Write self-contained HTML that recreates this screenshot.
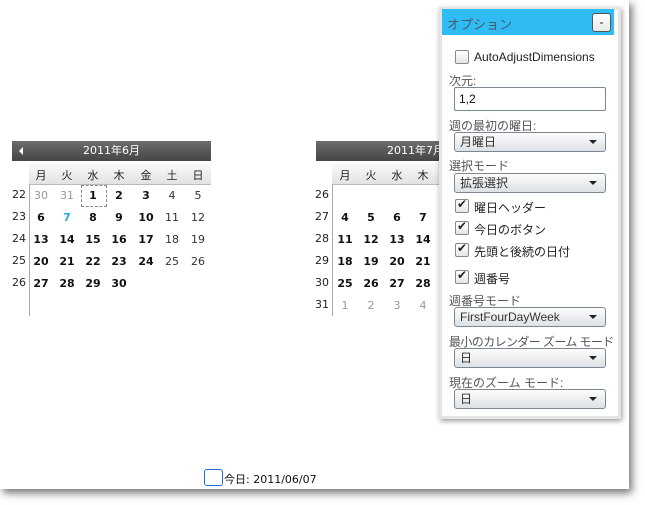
<!DOCTYPE html>
<html><head><meta charset="utf-8"><style>
body{margin:0;width:645px;height:505px;background:#fff;position:relative;overflow:hidden;font-family:"Liberation Sans","Noto Sans CJK JP",sans-serif;font-size:12px;color:#222}
.win{position:absolute;left:0;top:0;width:629px;height:489px;background:#fff;box-shadow:3px 4px 8px rgba(0,0,0,.55)}
.a{position:absolute}
.hdr{position:absolute;height:20px;background:linear-gradient(#6d6d6d,#454545);color:#fff;font-size:12px;line-height:20px;text-align:center;font-family:"DejaVu Sans","Noto Sans CJK JP",sans-serif;font-size:11px}
.dn{position:absolute;height:21px;background:linear-gradient(#fafafa,#e2e2e2);border-bottom:1px solid #bbb}
.c{position:absolute;width:26px;text-align:center;font-size:11px;font-family:"DejaVu Sans","Noto Sans CJK JP",sans-serif}
.b{font-weight:bold;color:#111}
.g{color:#999}
.n{color:#333}
.wk{position:absolute;width:16px;text-align:right;font-size:11px;color:#222;font-family:"DejaVu Sans",sans-serif}
.panel{position:absolute;left:439px;top:7px;width:176px;height:406px;background:#fff;border:3px solid #e4e4e4;box-shadow:1px 2px 5px rgba(0,0,0,.4)}
.in{position:absolute;left:-2px;top:-3px;width:180px;height:410px}
.lbl{position:absolute;left:9px;font-size:12px;color:#555;white-space:nowrap}
.cb{position:absolute;left:15px;width:12px;height:12px;border:1px solid #8a8a8a;border-radius:2px;background:linear-gradient(#fff,#e6e6e6)}
.cb.on::after{content:"✔";position:absolute;left:1px;top:-3px;font-size:12px;color:#222}
.ct{position:absolute;left:34px;font-size:12px;color:#222}
.dd{position:absolute;left:14px;width:150px;height:18px;border:1px solid #7a8794;border-radius:3px;background:linear-gradient(#fdfdfd,#dde1e5);font-size:12px;line-height:18px;color:#333;text-indent:5px}
.dd::after{content:"";position:absolute;right:8px;top:7px;border-left:4px solid transparent;border-right:4px solid transparent;border-top:4px solid #222}
</style></head><body>
<div class="win"></div>

<!-- Calendar 1 -->
<div class="hdr" style="left:12px;top:141px;width:199px">2011年6月</div>
<div class="a" style="left:19px;top:147px;border-top:4px solid transparent;border-bottom:4px solid transparent;border-right:4px solid #fff"></div>
<div class="dn" style="left:29px;top:163px;width:182px"></div>
<div class="a" style="left:29px;top:184px;width:1px;height:132px;background:#aaa"></div>
<div class="c" style="left:28px;top:167px">月</div><div class="c" style="left:54px;top:167px">火</div><div class="c" style="left:80px;top:167px">水</div><div class="c" style="left:106px;top:167px">木</div><div class="c" style="left:133px;top:167px">金</div><div class="c" style="left:159px;top:167px">土</div><div class="c" style="left:185px;top:167px">日</div>
<div class="wk" style="left:10px;top:188px">22</div><div class="wk" style="left:10px;top:210px">23</div><div class="wk" style="left:10px;top:232px">24</div><div class="wk" style="left:10px;top:254px">25</div><div class="wk" style="left:10px;top:276px">26</div>
<div class="a" style="left:81px;top:185px;width:24px;height:20px;border:1px dashed #888"></div>
<div class="c g" style="left:28px;top:189px">30</div><div class="c g" style="left:54px;top:189px">31</div><div class="c b" style="left:80px;top:189px">1</div><div class="c b" style="left:106px;top:189px">2</div><div class="c b" style="left:133px;top:189px">3</div><div class="c n" style="left:159px;top:189px">4</div><div class="c n" style="left:185px;top:189px">5</div>
<div class="c b" style="left:28px;top:211px">6</div><div class="c b" style="left:54px;top:211px;color:#2aa7e0">7</div><div class="c b" style="left:80px;top:211px">8</div><div class="c b" style="left:106px;top:211px">9</div><div class="c b" style="left:133px;top:211px">10</div><div class="c n" style="left:159px;top:211px">11</div><div class="c n" style="left:185px;top:211px">12</div>
<div class="c b" style="left:28px;top:233px">13</div><div class="c b" style="left:54px;top:233px">14</div><div class="c b" style="left:80px;top:233px">15</div><div class="c b" style="left:106px;top:233px">16</div><div class="c b" style="left:133px;top:233px">17</div><div class="c n" style="left:159px;top:233px">18</div><div class="c n" style="left:185px;top:233px">19</div>
<div class="c b" style="left:28px;top:255px">20</div><div class="c b" style="left:54px;top:255px">21</div><div class="c b" style="left:80px;top:255px">22</div><div class="c b" style="left:106px;top:255px">23</div><div class="c b" style="left:133px;top:255px">24</div><div class="c n" style="left:159px;top:255px">25</div><div class="c n" style="left:185px;top:255px">26</div>
<div class="c b" style="left:28px;top:277px">27</div><div class="c b" style="left:54px;top:277px">28</div><div class="c b" style="left:80px;top:277px">29</div><div class="c b" style="left:106px;top:277px">30</div>

<!-- Calendar 2 -->
<div class="hdr" style="left:316px;top:141px;width:199px">2011年7月</div>
<div class="dn" style="left:332px;top:163px;width:182px"></div>
<div class="a" style="left:332px;top:184px;width:1px;height:132px;background:#aaa"></div>
<div class="c" style="left:332px;top:167px">月</div><div class="c" style="left:358px;top:167px">火</div><div class="c" style="left:384px;top:167px">水</div><div class="c" style="left:410px;top:167px">木</div>
<div class="wk" style="left:313px;top:188px">26</div><div class="wk" style="left:313px;top:210px">27</div><div class="wk" style="left:313px;top:232px">28</div><div class="wk" style="left:313px;top:254px">29</div><div class="wk" style="left:313px;top:276px">30</div><div class="wk" style="left:313px;top:298px">31</div>
<div class="c b" style="left:332px;top:211px">4</div><div class="c b" style="left:358px;top:211px">5</div><div class="c b" style="left:384px;top:211px">6</div><div class="c b" style="left:410px;top:211px">7</div>
<div class="c b" style="left:332px;top:233px">11</div><div class="c b" style="left:358px;top:233px">12</div><div class="c b" style="left:384px;top:233px">13</div><div class="c b" style="left:410px;top:233px">14</div>
<div class="c b" style="left:332px;top:255px">18</div><div class="c b" style="left:358px;top:255px">19</div><div class="c b" style="left:384px;top:255px">20</div><div class="c b" style="left:410px;top:255px">21</div>
<div class="c b" style="left:332px;top:277px">25</div><div class="c b" style="left:358px;top:277px">26</div><div class="c b" style="left:384px;top:277px">27</div><div class="c b" style="left:410px;top:277px">28</div>
<div class="c g" style="left:332px;top:299px">1</div><div class="c g" style="left:358px;top:299px">2</div><div class="c g" style="left:384px;top:299px">3</div><div class="c g" style="left:410px;top:299px">4</div>

<!-- Today -->
<div class="a" style="left:204px;top:469px;width:17px;height:15px;border:1px solid #1e6fd0;border-radius:3px"></div>
<div class="a" style="left:224px;top:471px;font-size:11px;color:#111;font-family:'DejaVu Sans','Noto Sans CJK JP',sans-serif">今日: 2011/06/07</div>

<!-- Panel -->
<div class="panel"><div class="in">
  <div class="a" style="left:2px;top:2px;width:172px;height:26px;background:#2fbcf5"></div>
  <div class="a" style="left:7px;top:7px;font-size:13px;color:#4a5a66">オプション</div>
  <div class="a" style="left:152px;top:6px;width:17px;height:17px;border:1px solid #555;border-radius:3px;background:linear-gradient(#fff,#e8e8e8);text-align:center;line-height:16px;font-size:12px;color:#222">-</div>
  <div class="cb" style="top:43px"></div><div class="ct" style="top:43px">AutoAdjustDimensions</div>
  <div class="lbl" style="top:65px">次元:</div>
  <div class="a" style="left:14px;top:80px;width:150px;height:22px;border:1px solid #7a8794;border-radius:2px;line-height:22px;text-indent:4px;font-size:12px;color:#111">1,2</div>
  <div class="lbl" style="top:110px">週の最初の曜日:</div>
  <div class="dd" style="top:125px">月曜日</div>
  <div class="lbl" style="top:150px">選択モード</div>
  <div class="dd" style="top:166px">拡張選択</div>
  <div class="cb on" style="top:192px"></div><div class="ct" style="top:192px">曜日ヘッダー</div>
  <div class="cb on" style="top:214px"></div><div class="ct" style="top:214px">今日のボタン</div>
  <div class="cb on" style="top:236px"></div><div class="ct" style="top:236px">先頭と後続の日付</div>
  <div class="cb on" style="top:263px"></div><div class="ct" style="top:263px">週番号</div>
  <div class="lbl" style="top:285px">週番号モード</div>
  <div class="dd" style="top:300px">FirstFourDayWeek</div>
  <div class="lbl" style="top:326px;letter-spacing:-0.6px">最小のカレンダー ズーム モード</div>
  <div class="dd" style="top:341px">日</div>
  <div class="lbl" style="top:367px">現在のズーム モード:</div>
  <div class="dd" style="top:382px">日</div>
</div></div>
</body></html>
